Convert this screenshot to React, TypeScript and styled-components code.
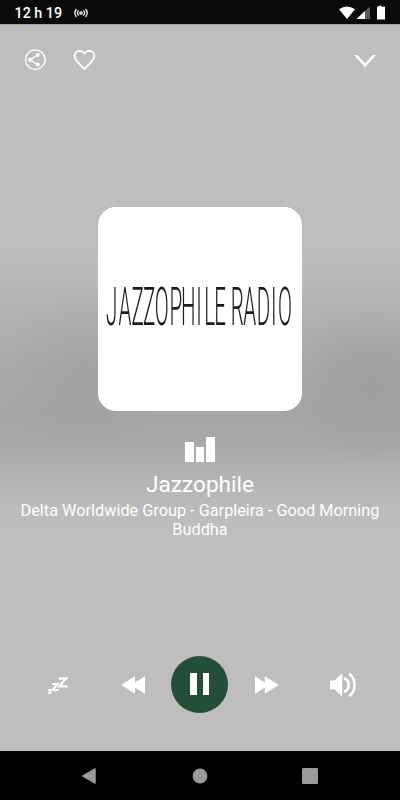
import React from 'react';
import styled, { createGlobalStyle } from 'styled-components';

const GlobalStyle = createGlobalStyle`
  * { box-sizing: border-box; }
  html, body { margin: 0; padding: 0; background: #000; }
  body { font-family: Roboto, 'Liberation Sans', sans-serif; }
  svg { display: block; }
`;

const Screen = styled.div`
  width: 400px;
  height: 800px;
  display: flex;
  flex-direction: column;
  overflow: hidden;
  color: #fff;
`;

const StatusBar = styled.header`
  height: 24px;
  flex: none;
  display: flex;
  align-items: center;
  padding: 1px 14px 0 14.5px;
  background: #0a0a0a;
`;

const Clock = styled.span`
  width: 59px;
  font-size: 14.3px;
  line-height: 24px;
  font-weight: 500;
  white-space: nowrap;
`;

const StatusIcons = styled.div`
  margin-left: auto;
`;

const Player = styled.main`
  flex: 1;
  display: flex;
  flex-direction: column;
  align-items: center;
  border-top: 1px solid #a2a2a2;
  background:
    radial-gradient(ellipse 85px 85px at 372px 358px, rgba(140, 140, 140, 0.36), rgba(140, 140, 140, 0) 100%),
    radial-gradient(ellipse 85px 90px at 85px 350px, rgba(145, 145, 145, 0.27), rgba(145, 145, 145, 0) 100%),
    linear-gradient(
      180deg,
      #bebebe 0,
      #bebebe 215px,
      #bababa 245px,
      #b1b1b1 290px,
      #aaaaaa 340px,
      #a6a6a6 390px,
      #a9a9a9 420px,
      #b3b3b3 452px,
      #bbbbbb 482px,
      #bebebe 510px,
      #bebebe 100%
    );
`;

const TopActions = styled.div`
  align-self: stretch;
  display: flex;
  align-items: center;
  height: 70px;
  padding: 0 23px 0 24px;
`;

const IconButton = styled.button<{ $gap?: number; $end?: boolean }>`
  display: block;
  flex: none;
  padding: 0;
  border: 0;
  background: none;
  color: inherit;
  margin-left: ${({ $gap = 0, $end }) => ($end ? 'auto' : `${$gap}px`)};
`;

const Artwork = styled.div`
  width: 204px;
  height: 204px;
  margin-top: 112px;
  flex: none;
  overflow: hidden;
  border-radius: 18px;
  background: #fff;
  will-change: transform;
`;

const Wordmark = styled.text`
  font-family: Roboto, 'Liberation Sans', sans-serif;
  font-weight: 300;
  font-size: 53.5px;
  text-anchor: middle;
  fill: #1b1b1b;
`;

const Equalizer = styled.div`
  display: flex;
  align-items: flex-end;
  gap: 2px;
  height: 25px;
  margin-top: 26px;
`;

const Bar = styled.span<{ $height: number }>`
  width: 8.5px;
  height: ${({ $height }) => $height}px;
  background: #fff;
`;

const Station = styled.h1`
  margin: 9px 0 0;
  font-size: 22.6px;
  line-height: 28px;
  font-weight: 400;
`;

const Track = styled.p`
  margin: 2px 0 0;
  width: 380px;
  text-align: center;
  font-size: 16.3px;
  line-height: 19px;
`;

const Controls = styled.div`
  align-self: stretch;
  display: flex;
  align-items: center;
  margin-top: auto;
  margin-bottom: 38px;
  padding-left: 47px;
`;

const PauseButton = styled.button`
  width: 57px;
  height: 57px;
  flex: none;
  margin-left: 26px;
  padding: 0 0 1px;
  border: 0;
  border-radius: 50%;
  background: #245039;
  display: flex;
  align-items: center;
  justify-content: center;
  gap: 6px;
`;

const PauseBar = styled.span`
  width: 6.5px;
  height: 22px;
  background: #fff;
`;

const NavigationBar = styled.nav`
  height: 49px;
  flex: none;
  display: flex;
  align-items: center;
  justify-content: space-between;
  padding: 0 82px 0 81px;
  background: #000;
`;

const CastIcon = () => (
  <svg width="14" height="12" viewBox="0 0 15 12" fill="none" stroke="#fff" strokeWidth="1.35">
    <circle cx="7.5" cy="6" r="1.3" />
    <path d="M4.9 3.2C3.5 4.8 3.5 7.2 4.9 8.8M10.1 3.2c1.4 1.6 1.4 4 0 5.6M2.7 1.7C.3 4.1.3 7.9 2.7 10.3M12.3 1.7c2.4 2.4 2.4 6.2 0 8.6" />
  </svg>
);

const SignalIcons = () => (
  <svg width="48" height="16" viewBox="0 0 48 16">
    <path d="M1 4.200Q9 -1.400 17 4.200L9 14Z" fill="#fff" />
    <path d="M32 1.500V14H18.500Z" fill="#5b5b5b" />
    <path d="M27 6.100V14H18.500Z" fill="#fff" />
    <path d="M40.500 .8h3v1H47V14.500H39V1.800h1.500Z" fill="#fff" />
  </svg>
);

const ShareIcon = () => (
  <svg width="22" height="22" viewBox="0 0 22 22" stroke="#fff" fill="none">
    <circle cx="11.300" cy="10.700" r="9.800" strokeWidth="1.350" />
    <path d="M13.600 6 6.200 10.800 13.600 15.600" strokeWidth="1.200" />
    <g fill="#fff" stroke="none">
      <circle cx="13.800" cy="6" r="2" />
      <circle cx="6.200" cy="10.800" r="2.200" />
      <circle cx="13.800" cy="15.600" r="2" />
    </g>
  </svg>
);

const HeartIcon = () => (
  <svg width="24" height="22" viewBox="0 0 24 22" fill="none" stroke="#fff" strokeWidth="1.800" strokeLinejoin="round">
    <path d="M12.400 19.900 10.700 18.300C5.200 13.300 2.500 10.300 2.500 7 2.500 4 4.600 1.800 7.400 1.800c2 0 3.800 1 5 2.700C13.600 2.800 15.400 1.800 17.400 1.800c2.800 0 5 2.200 5 5.200 0 3.300-2.800 6.300-8.300 11.300Z" />
  </svg>
);

const ChevronIcon = () => (
  <svg width="24" height="16" viewBox="0 0 24 16">
    <path d="M1.200 3H4.300L12 11.600 19.800 3H22.900L12 15.200Z" fill="#fff" />
  </svg>
);

const LOGO_SCALE = 0.385;
const LETTER_CENTERS = [
  13.6, 27, 39.6, 51.1, 63.7, 77.8, 90.2, 101, 111.6, 122, 131, 139.3, 151.7, 165.5, 175.7, 187,
];

const StationLogo = () => (
  <svg width="204" height="204" viewBox="0 0 204 204">
    <g transform={`translate(0 118) scale(${LOGO_SCALE} 1)`}>
      <Wordmark x={LETTER_CENTERS.map((center) => center / LOGO_SCALE).join(' ')}>JAZZOPHILE RADIO</Wordmark>
    </g>
  </svg>
);

const SleepIcon = () => (
  <svg width="22" height="22" viewBox="0 0 22 22" fill="none" stroke="#fff">
    <path d="M11.800 4.500H19L12.400 12.300H20.700" strokeWidth="2.300" />
    <path d="M5.100 10.100H10.500L5.400 16.100H11.600" strokeWidth="2" />
    <path d="M1.200 16H4L1.600 19H4.800" strokeWidth="1.300" />
  </svg>
);

const SkipIcon = ({ forward = false }: { forward?: boolean }) => (
  <svg width="24" height="20" viewBox="0 0 24 20" fill="#fff">
    {forward ? (
      <path d="M0 1.300 9.800 7.500V1.300L23.800 10 9.800 18.700V12.500L0 18.700Z" />
    ) : (
      <path d="M24 1.300 14 7.500V1.300L.3 10 14 18.700V12.500L24 18.700Z" />
    )}
  </svg>
);

const VolumeIcon = () => (
  <svg width="26" height="26" viewBox="0 0 26 26">
    <path d="M0 8.600H4.500L12.200 1.200V24.600L4.500 17.200H0Z" fill="#fff" />
    <path d="M14 6.200C20.200 8.200 20.200 17.600 14 19.800M19.200 1.800C26.300 7.200 26.300 18.600 19.200 24.200" fill="none" stroke="#fff" strokeWidth="2.500" />
  </svg>
);

const BackIcon = () => (
  <svg width="16" height="18" viewBox="0 0 16 18">
    <path d="M14.200 1.500V16.500L1.300 9Z" fill="#9b9b9b" stroke="#9b9b9b" strokeLinejoin="round" />
  </svg>
);

const HomeIcon = () => (
  <svg width="16" height="16" viewBox="0 0 16 16">
    <circle cx="8" cy="8" r="7.400" fill="#9b9b9b" />
  </svg>
);

const RecentsIcon = () => (
  <svg width="16" height="16" viewBox="0 0 16 16">
    <rect width="16" height="16" rx="1.200" fill="#9b9b9b" />
  </svg>
);

export default function App() {
  return (
    <>
      <GlobalStyle />
      <Screen>
        <StatusBar>
          <Clock>12 h 19</Clock>
          <CastIcon />
          <StatusIcons><SignalIcons /></StatusIcons>
        </StatusBar>
        <Player>
          <TopActions>
            <IconButton aria-label="Share"><ShareIcon /></IconButton>
            <IconButton $gap={26} aria-label="Favorite"><HeartIcon /></IconButton>
            <IconButton $end aria-label="Collapse"><ChevronIcon /></IconButton>
          </TopActions>
          <Artwork><StationLogo /></Artwork>
          <Equalizer>
            <Bar $height={20} />
            <Bar $height={15} />
            <Bar $height={25} />
          </Equalizer>
          <Station>Jazzophile</Station>
          <Track>Delta Worldwide Group - Garpleira - Good Morning Buddha</Track>
          <Controls>
            <IconButton aria-label="Sleep timer"><SleepIcon /></IconButton>
            <IconButton $gap={52} aria-label="Previous"><SkipIcon /></IconButton>
            <PauseButton aria-label="Pause"><PauseBar /><PauseBar /></PauseButton>
            <IconButton $gap={27} aria-label="Next"><SkipIcon forward /></IconButton>
            <IconButton $gap={51} aria-label="Volume"><VolumeIcon /></IconButton>
          </Controls>
        </Player>
        <NavigationBar>
          <BackIcon />
          <HomeIcon />
          <RecentsIcon />
        </NavigationBar>
      </Screen>
    </>
  );
}
